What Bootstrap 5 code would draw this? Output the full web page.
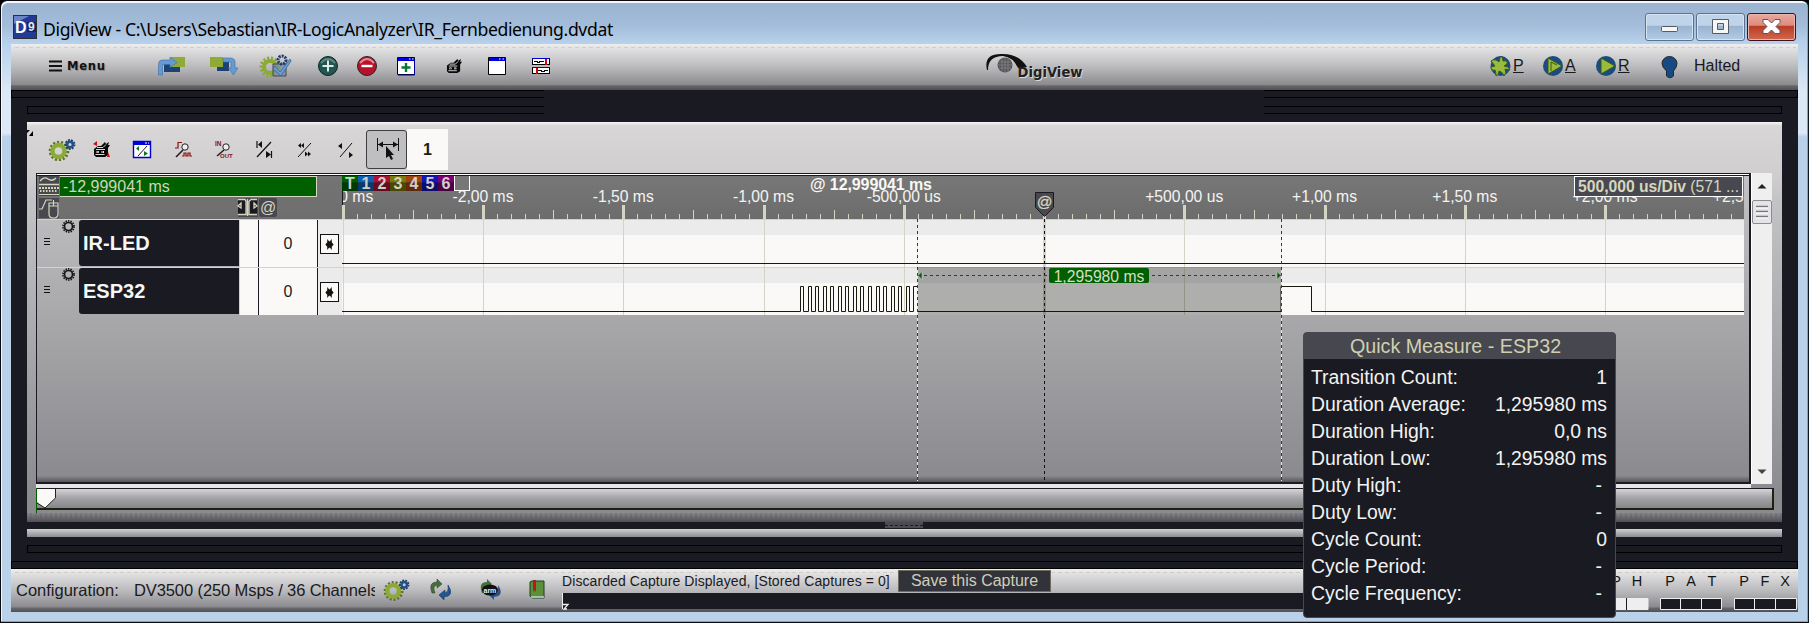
<!DOCTYPE html>
<html lang="de">
<head>
<meta charset="utf-8">
<title>DigiView</title>
<link href="https://cdn.jsdelivr.net/npm/bootstrap@5.3.0/dist/css/bootstrap.min.css" rel="stylesheet">
<style>
body{margin:0;background:#000;font-family:"Liberation Sans",sans-serif;font-size:16px;line-height:1;color:#1a1a1c;overflow:hidden}
svg{display:block;overflow:visible}
.win{width:1809px;height:623px;border:1px solid #0a0a10;border-right-color:#08181c;border-radius:7px 7px 0 0;padding:0 10px 9px 10px;box-shadow:inset -1px -1px 0 #33c6e2,inset 1px 2px 0 #f4f8fc;background:linear-gradient(#9ab4d2 3px,#a3bcd9 24px,#b8d1ec 43px,#dbe8f5 90px,#dbe8f5 132px,#bad1ea 136px)}
.titlebar{height:43px;padding:14px 0 0 2px}
.title-text{font:17.6px/28px "Noto Sans",sans-serif;color:#000;white-space:nowrap;margin-left:6px;letter-spacing:-.37px;height:26px}
.wbtn{width:49px;height:28px;border:1px solid #5c7290;border-radius:3px;box-shadow:inset 0 0 0 1px #d6e5f4;background:linear-gradient(#c0d4e9 0 44%,#98b3d0 45%,#b3cce6);margin-top:-2px;margin-left:2px}
.wbtn.shut{background:linear-gradient(#e9a99d,#dc8b7d 44%,#b83a22 45%,#cf6a50);border-color:#42121a;box-shadow:inset 0 0 0 1px #eab6ab}
.chrome{background:#191a22;height:568px}
.metal{background:linear-gradient(#efeeee,#e2e1e2 10%,#b5b4b7 55%,#8b8a8e 88%,#68676b 91%,#505054)}
.mainbar{height:46px;display:grid;align-items:center;padding:0 0 2px 38px;grid-template-columns:109px 52px 49px 59px 39px 40px 49px 42px 44px 453px 505px 53px 53px 64px 34px auto;position:relative}
.dash:before{content:"";position:absolute;left:4px;right:2px;top:3px;height:1px;background:repeating-linear-gradient(90deg,#cfcdce 0 4px,transparent 4px 7px)}
.menu-label{font:bold 11.5px/14px "DejaVu Sans",sans-serif;letter-spacing:.75px;color:#111;text-shadow:1px 1px 1px #888}
.run-key{gap:2px}
.slots{height:32px}
.slot{border:1px solid #000;height:8px;background:#191a22}
.slot.openr{border-right:0}.slot.openl{border-left:0}
.panel{margin:0 16px;height:399px;position:relative;background:linear-gradient(#fbf4f4 0,#d8d6d7 4px,#cfcdce 54px,#c3c2c5 80px,#8b8a8f 376px)}
.ptools{height:51px;display:grid;align-items:center;padding:4px 0 0 21px;grid-template-columns:45px 40px 42px 40px 41px 41px 41px 28px 41px 41px}
.pressed{height:39px;width:41px;border:1px solid #3d3d44;border-radius:3px;background:#bfbec1}
.onebox{background:#faf9f8;height:41px;width:41px;font-weight:bold;font-size:16px;color:#1e1a10}
.viewer{margin-left:9px;width:1715px;height:311px;border:2px solid #191a22;border-top:1px solid #191a22;border-left-width:1px;background:linear-gradient(#c3c2c5,#a9a9ab 45%,#8b8a8f 98%,#55545a);padding-top:2px;position:relative;box-shadow:0 4px 0 #e9e5e6}
.viewer:before{content:"";position:absolute;left:0;right:0;top:0;height:2px;background:linear-gradient(#fff 1px,#191a22 1px)}
.left{width:305px}
.lhead{height:43px;background:linear-gradient(#747474,#6e6e6e);color:#f0efe8}
.gbox{background:#006000;border:1px solid #d5d8c0;border-width:1px 1px 1px 0;width:257px;height:21px;line-height:20px;padding-left:3px;color:#cfd4bd;font-size:16px}
.chan{height:48px;border-top:1px solid #d3d4c3}
.cname{width:160px;height:46px;background:#191a22;border-radius:3px 0 0 3px;color:#f6f6f4;font-weight:bold;font-size:20px;line-height:47px;padding-left:4px;margin-left:4px}
.vcol{width:20px;background:#faf9f8;border-right:1px solid #191a22;border-left:1px solid #d3d4c3}
.val{width:59px;background:#faf9f8;border-right:1px solid #191a22;color:#222}
.xcol{width:24px;background:#ebebeb;padding-left:2px}
.xbox{width:19px;height:20px;border:1px solid #111;background:#faf9f8}
.vscroll{width:21px;height:311px;background:#f0efef;border-left:1px solid #fff}
.thumb{height:24px;border:1px solid #8c8c90;border-radius:2px;background:#e4e4e8}
.hbar{margin:4px 8px 0 9px;height:22px;border:1px solid #191a22;border-bottom:2px solid #1c2112;border-right:2px solid #1c2112;background:linear-gradient(#d8d3d9,#a6a5a8 45%,#83868a)}
.pfoot{height:9px;background:repeating-linear-gradient(90deg,#0000 0 3px,#55555c40 3px 5px),linear-gradient(#858489,#504f54);margin-top:3px}
.split{margin:8px 16px;height:8px;background:linear-gradient(#cfd0d2,#8b8c90);position:relative}
.grip{position:absolute;left:858px;top:-7px;width:38px;height:6px;background:#4c4b53}
.grip:after{content:"";display:block;margin-top:3px;border-top:1px dashed #191a22}
.status{height:43px;position:relative;padding-left:5px}
.cfg{font-size:16.5px;line-height:20px;padding-top:11px;white-space:nowrap}
.cfg-val{letter-spacing:-.1px}
.savebtn{font-size:16px;width:153px;height:22px;border:1px solid #6e6d5c;background:#32323a;color:#cfcfb8;position:relative;margin-top:1px}
.capture-note{font-size:14px;line-height:16px;padding-top:4px;width:336px;white-space:nowrap;letter-spacing:.09px}
.prog{height:16px;width:745px;background:#191a22;border-left:1px solid #eee}
.qm{position:absolute;left:1303px;top:332px;width:313px;height:286px;border:1px solid #47474f;border-radius:4px;background:#191a22;color:#f2f2f0;font-size:19.4px;line-height:26px}
.qm-head{background:#47474f;color:#cfcfb0;text-align:center;height:26px;line-height:26px;font-size:19.7px;padding-right:8px;margin-bottom:5px}
.qm-row{padding:0 8px 0 7px;height:27px}
.dashv{padding-right:5px}
</style>
</head>
<body>
<svg width="0" height="0" class="position-absolute"><defs>
<symbol id="gears" viewBox="0 0 28 22"><circle cx="11" cy="12" r="8.3" fill="none" stroke="#5c7428" stroke-width="4" stroke-dasharray="2 1.7"/><circle cx="10.5" cy="12" r="6" fill="none" stroke="#8caa38" stroke-width="4.4"/><circle cx="22" cy="5.5" r="4.2" fill="none" stroke="#173a66" stroke-width="2.4" stroke-dasharray="1.7 1.2"/><circle cx="22" cy="5.5" r="2.8" fill="none" stroke="#21508a" stroke-width="2.4"/></symbol>
<symbol id="robot" viewBox="0 0 18 17"><path d="M1 8 5 5h3l4-4 1 2 3-2-1 3h2l-2 3v7l-3 2H3l-2-2z" fill="#080808"/><path d="M4 6.500h6l3-3M3 8.500h9M2.500 13.500h9" fill="none" stroke="#eee" stroke-width=".9"/><path d="M3.500 10h2.500v2H3.500zM8.500 10h2.500v2H8.500z" fill="#eee"/><path d="M4.500 10.500h1v1h-1zM9 10.500h1v1H9z" fill="#080808"/></symbol>
<symbol id="ring" viewBox="0 0 14 14"><circle cx="7" cy="7" r="4.300" fill="none" stroke="#15151a" stroke-width="1.800"/><circle cx="7" cy="7" r="6" fill="none" stroke="#15151a" stroke-width="1.800" stroke-dasharray="1.500 1.200"/></symbol>
<symbol id="star" viewBox="0 0 9 12"><path d="M2 0v3.500L0 6l2 2.500V12l2-2.500h1L7 12V8.500L9 6 7 3.500V0L5 2.500H4z" fill="#15150c"/></symbol>
</defs></svg>
<div class="win">
  <header class="titlebar d-flex">
    <svg width="24" height="24"><rect x=".5" y=".5" width="23" height="23" fill="#223a96" stroke="#2b3038"/><path d="M1 23V9L16 1H1z" fill="#6d84ca"/><rect x="14" y="7" width="9" height="10" fill="#192356"/><text x="2" y="18" font-size="16" font-weight="bold" fill="#fff">D</text><text x="15" y="16" font-size="12" font-weight="bold" fill="#dfe4ff">9</text></svg>
    <div class="title-text">DigiView - C:\Users\Sebastian\IR-LogicAnalyzer\IR_Fernbedienung.dvdat</div>
    <div class="d-flex ms-auto" style="margin-right:2px">
      <div class="wbtn"><svg width="47" height="26"><rect x="15.500" y="12.500" width="16" height="5" rx="1" fill="#f8f6f2" stroke="#555a6a"/></svg></div>
      <div class="wbtn"><svg width="47" height="26"><path d="M15.500 5.500h16v14h-16zM20.500 9.500v6h6v-6z" fill="#f8f6f2" fill-rule="evenodd" stroke="#555a6a"/></svg></div>
      <div class="wbtn shut"><svg width="47" height="26"><path d="M15 5.500h5l3.500 3.500L27 5.500h5v3L28 12.500l4 4v3h-5L23.500 16 20 19.500h-5v-3l4-4-4-4z" fill="#fff" stroke="#5e5560"/></svg></div>
    </div>
  </header>
  <div class="chrome">
    <nav class="mainbar metal dash">
      <div class="d-flex align-items-center gap-1"><svg width="14" height="12"><path d="M0 1.500h13M0 6h13M0 10.500h13" stroke="#111" stroke-width="2"/></svg><span class="menu-label">Menu</span></div>
      <svg width="28" height="18"><path d="M6 7h16v8H6z" fill="#1d4375"/><path d="M13 0h14v10H13z" fill="#8fab35"/><path d="M.5 18V7q0-4 4-4H12V0l7 5.500-7 5V7.500H4.500V18z" fill="#649bd3" stroke="#3f6ea2" stroke-width=".6"/></svg>
      <svg width="28" height="18"><path d="M7 5h12v9H7z" fill="#1d4375"/><path d="M0 0h13v10H0z" fill="#8fab35"/><path d="M13 1h7q5 0 5 4v6h3l-4.500 7-5-7H21V5h-8z" fill="#649bd3" stroke="#3f6ea2" stroke-width=".6"/></svg>
      <svg width="33" height="22"><circle cx="11" cy="12" r="8.500" fill="none" stroke="#8caa38" stroke-width="4" stroke-dasharray="2 1.700"/><circle cx="11" cy="12" r="6" fill="none" stroke="#8caa38" stroke-width="4"/><path d="M14 9h13v12H14z" fill="#7a8ba0aa" stroke="#445" /><circle cx="23" cy="5" r="4" fill="none" stroke="#1d3e6c" stroke-width="3" stroke-dasharray="2 1"/><path d="m16 11 5 6L31 4l1 2-10 15-8-7z" fill="#669dd6" stroke="#315d90" stroke-width=".7"/></svg>
      <svg width="20" height="20"><circle cx="10" cy="10" r="9.500" fill="#24544f" stroke="#0b2625"/><path d="M3 7q7-8 14 0" fill="none" stroke="#5b8782" stroke-width="2"/><path d="M10 4.500v11M4.500 10h11" stroke="#dceee8" stroke-width="2"/></svg>
      <svg width="20" height="20"><circle cx="10" cy="10" r="9.500" fill="#b61329" stroke="#242428"/><path d="M3 7q7-8 14 0" fill="none" stroke="#e98590" stroke-width="2"/><path d="M4.500 10h11" stroke="#fff" stroke-width="2.400"/></svg>
      <svg width="18" height="18"><path d="M.5.5h17v17H.5z" fill="#fff" stroke="#001"/><path d="M1 1h16v3H1z" fill="#00d"/><path d="M17.500 3v15H1" fill="none" stroke="#009"/><path d="M9 6v9M4.500 10.500h9" stroke="#067a35" stroke-width="2.400"/><path d="M12 2h1.500M15 2h1.500" stroke="#fff"/></svg>
      <svg width="17" height="16"><use href="#robot"/></svg>
      <svg width="18" height="18"><path d="M.5.5h17v17H.5z" fill="#fff" stroke="#000"/><path d="M1 1h16v3H1z" fill="#00d"/><path d="M11 2h1.500M14.500 2H16" stroke="#fff"/></svg>
      <svg width="18" height="16" shape-rendering="crispEdges"><path d="M.5.500h17v6H.5zM.5 9.500h17v6H.5z" fill="#fff" stroke="#000"/><path d="M0 .5h18M0 9.500h18" stroke="#00c"/><path d="M2 3.500h3v1h2v-1h5M6 12.500h3v1h3v-1h4" stroke="#000" fill="none"/><path d="M14 1v6M5 10v6" stroke="#d00" stroke-width="2"/></svg>
      <svg width="98" height="26"><path d="M2 17Q-2 0 18 1q16 0 24 13l-9 1Q28 4 18 3 3 3 3 17z" fill="#111"/><circle cx="20" cy="12" r="7.500" fill="#55555a"/><path d="M14 9h12M13 12h14M14 15h12M17 5v14M20 5v15M23 5v14" stroke="#8a8a8e" stroke-width=".7"/><text x="32.500" y="23.500" font-size="13.500" font-family="DejaVu Sans" font-weight="bold" fill="#222" textLength="65" lengthAdjust="spacingAndGlyphs" style="text-shadow:1px 1px 0 #d8d8d8">DigiView</text></svg>
      <div class="run-key d-flex align-items-center"><svg width="21" height="22"><circle cx="10.500" cy="11" r="10" fill="#1c4c7e"/><path d="M1 6q4-3 8 1 0-4 3-6l1 5q5-1 4 3l-3 2q5 0 6 4l-5-1q2 4-1 7-1-4-5-5 0 4-3 5 0-4-1-6-4 1-4-3l4-1z" fill="#9bbb3c" stroke="#39591c"/></svg><u>P</u></div>
      <div class="run-key d-flex align-items-center"><svg width="20" height="22"><circle cx="10" cy="11" r="10" fill="#1c4c7e"/><path d="M5 3v16l14-8z" fill="#9bbb3c" stroke="#39591c"/><path d="M8 16V7l6 3" fill="none" stroke="#39591c"/></svg><u>A</u></div>
      <div class="run-key d-flex align-items-center"><svg width="20" height="22"><circle cx="10" cy="11" r="10" fill="#1c4c7e"/><path d="M5 3v16l14-8z" fill="#9bbb3c" stroke="#39591c"/></svg><u>R</u></div>
      <svg width="18" height="23"><path d="M5.500 20v-5Q1 11 1 7.500a7.500 7 0 0 1 15 0Q16 11 12.500 15v5q-3.500 3.500-7 0z" fill="#174a80" stroke="#222a30" transform="translate(1 1)"/></svg>
      <div>Halted</div>
    </nav>
    <div class="slots d-flex justify-content-between"><div>
      <div class="slot openr" style="width:533px"></div><div class="slot openr" style="width:517px;margin:8px 0 0 16px"></div></div>
      <div><div class="slot openl" style="width:534px"></div><div class="slot openl" style="width:518px;margin-top:8px"></div></div></div>
    <main class="panel">
      <svg class="position-absolute" style="left:0;top:8px" width="6" height="6"><path d="M0 0h3L0 3zM6 1v5H2z" fill="#000"/></svg>
      <div class="ptools">
        <svg width="28" height="22"><use href="#gears"/></svg>
        <svg width="18" height="17"><use href="#robot"/><path d="m0 3 4-3v5zM15 11l-1 5h3z" fill="#d01010"/></svg>
        <svg width="18" height="17"><path d="M.5.500h17v16H.5z" fill="#fff" stroke="#00c" stroke-width="1.400"/><path d="M1 1h16v3H1z" fill="#00d"/><path d="M12 2h2M15 2h1" stroke="#fff"/><path d="M14 5 5 15" stroke="#222"/><path d="M6 5v5L3 7.500zM11 10v5l4-2.500z" fill="#087a18"/></svg>
        <svg width="17" height="15"><path d="M0 6h3V.5h4M7 14h2v-3h2v3h2v-3h2v3h2" fill="none" stroke="#8b1010" stroke-width="1.200"/><circle cx="10" cy="5" r="3.200" fill="#eee" stroke="#222"/><path d="m8 8-7 7" stroke="#222" stroke-width="1.600"/></svg>
        <svg width="18" height="17"><text x="0" y="5" font-size="6.500" font-weight="bold" fill="#8b1010">IN</text><text x="5" y="17" font-size="6" font-weight="bold" fill="#8b1010">OUT</text><circle cx="11" cy="6" r="3.200" fill="#eee" stroke="#222"/><path d="m9 9-7 6" stroke="#222" stroke-width="1.600"/></svg>
        <svg width="17" height="17"><path d="M1 0v7M15.500 10v7M15 1 1 16" stroke="#111" stroke-width="1.200"/><path d="M6 0v7L2 3.500zM10 10v7l5-3.500z" fill="#111"/></svg>
        <svg width="15" height="15"><path d="M14 1 1 15" stroke="#111"/><path d="M4 1v5L1 3.500zM7 1v5L4 3.500zM8 9.500v5l3-2.500zM11 9.500v5l3-2.500z" fill="#111"/></svg>
        <svg width="15" height="16"><path d="M14 1 2 15" stroke="#111"/><path d="M4 1v6L0 4zM11 10v6l4-3z" fill="#111"/></svg>
        <div class="pressed"><svg width="39" height="37"><path d="M10.500 7v13M31.500 7v13M11 13.500h20" stroke="#111"/><path d="m11 13.500 5-3v6zM31 13.500l-5-3v6z" fill="#111"/><path d="m19 15v12l3-2 2 4 2-1-2-4h3z" fill="#111"/></svg></div>
        <div class="onebox d-flex align-items-center justify-content-center">1</div>
      </div>
      <div class="d-flex">
        <div class="viewer d-flex">
          <div class="left">
            <div class="lhead">
              <div class="d-flex"><svg width="23" height="21"><rect x="2" y="0" width="20" height="20" fill="#484850"/><path d="M3 5q4-5 8-2t8-1M2 8.500h20" fill="none" stroke="#d5d6bd" stroke-width="1.400"/><path d="M2 12h20" stroke="#d5d6bd" stroke-width="2" stroke-dasharray="2 1"/><path d="M3 15h18" stroke="#d5d6bd" stroke-width="2" stroke-dasharray="1.500 1.500"/><path d="M2 18.500h20" stroke="#d5d6bd"/></svg><div class="gbox">-12,999041 ms</div></div>
              <div class="d-flex"><svg width="23" height="21"><rect x="2" y="1" width="20" height="20" fill="#484850"/><path d="M2 12h3l4-9h6M12 6h9v11q0 4-4.500 4T12 17zM12 9h9M16.500 3v6" fill="none" stroke="#d5d6bd" stroke-width="1.200"/></svg>
              <svg width="42" height="21" style="margin-left:178px"><rect y="1" width="20" height="19" fill="#484850"/><path d="M0 2.500h7l1 2v13h-8M19 2.500h-6l-2 2v13h8M9.500 2v17M0 9l3-3v5zM19 9l-3-3v5z" fill="#191a22" stroke="#d5d6bd" stroke-width="1.300"/><rect x="21" y="1" width="18" height="19" rx="2" fill="#484850"/><text x="22" y="16" font-size="16" fill="#d5d6bd">@</text></svg></div>
            </div>
            <div class="chan d-flex"><svg width="38" height="46"><path d="M7 18.500h6M7 21.500h6M7 24.500h6" stroke="#111" stroke-width="1.200"/><use href="#ring" x="25" y="0" width="13" height="13"/></svg><div class="cname">IR-LED</div><div class="vcol"></div><div class="val d-flex align-items-center justify-content-center">0</div><div class="xcol d-flex align-items-center"><div class="xbox"><svg width="17" height="18"><use href="#star" x="4" y="4" width="9" height="11"/></svg></div></div></div>
            <div class="chan d-flex"><svg width="38" height="46"><path d="M7 18.500h6M7 21.500h6M7 24.500h6" stroke="#111" stroke-width="1.200"/><use href="#ring" x="25" y="0" width="13" height="13"/></svg><div class="cname">ESP32</div><div class="vcol"></div><div class="val d-flex align-items-center justify-content-center">0</div><div class="xcol d-flex align-items-center"><div class="xbox"><svg width="17" height="18"><use href="#star" x="4" y="4" width="9" height="11"/></svg></div></div></div>
          </div>
          <svg id="wave" width="1402" height="306" viewBox="342 176 1402 306" style="overflow:hidden" font-size="15.700"></svg>
        </div>
        <div class="vscroll"><svg width="20" height="27"><path d="m5.500 15.500 4.500-4.500 4.500 4.500z" fill="#222"/></svg><div class="thumb"><svg width="18" height="22"><path d="M3 5.500h12M3 10.500h12M3 15.500h12" stroke="#777" stroke-width="1.500"/><path d="M3 7h12M3 12h12M3 17h12" stroke="#fff"/></svg></div><svg width="20" height="255"><path d="m5.500 245.500 4.500 4.500 4.500-4.500z" fill="#444"/></svg></div>
      </div>
      <div class="hbar"><svg width="20" height="20"><path d="M0 0h18.500v9L8 19 0 13z" fill="#faf9f8"/><path d="M18.500 0v9L8 19 0 14" fill="none" stroke="#222"/><path d="M-.5-4v28" stroke="#006000"/></svg></div>
      <div class="pfoot"></div>
    </main>
    <div class="split"><div class="grip"></div></div>
    <div class="slot" style="margin:0 16px"></div>
    <div class="slot" style="margin-top:8px"></div>
    <footer class="status metal dash d-flex">
      <div class="cfg" style="width:118px">Configuration:</div>
      <div class="cfg cfg-val overflow-hidden" style="width:241px">DV3500 (250 Msps / 36 Channels)</div>
      <div class="d-flex align-items-center" style="width:187px;padding-left:8px;height:41px">
        <svg width="27" height="22"><use href="#gears"/></svg>
        <svg width="24" height="21" style="margin-left:19px"><path d="M3 14Q-1 3 8 3V0l5 5-5 4V6Q3 7 6 14z" fill="#456d3d" stroke="#2f4c2e" stroke-width=".6"/><path d="M19 6q7 11-4 12v3l-5-5 6-5v3q4-1 3-8z" fill="#235591" stroke="#173a66" stroke-width=".6"/></svg>
        <svg width="24" height="21" style="margin-left:26px"><path d="M3 14Q-1 3 8 3V0l5 5-5 4V6Q3 7 6 14z" fill="#456d3d"/><path d="M19 6q7 11-4 12v3l-5-5 6-5v3q4-1 3-8z" fill="#235591"/><ellipse cx="11" cy="11" rx="8" ry="5.500" fill="#111"/><text x="4.500" y="13.500" font-size="7" font-weight="bold" fill="#eee">arm</text></svg>
        <svg width="15" height="19" style="margin-left:27px"><path d="M2 1h12v17H2l-2-2V2z" fill="#5d8f3b" stroke="#1d3f22"/><path d="M1 17h13" stroke="#bfd8cf" stroke-width="1.500"/><path d="M3 0h3v12l-1.500-2L3 12z" fill="#bb1624"/></svg>
      </div>
      <div>
        <div class="d-flex align-items-start" style="height:24px"><div class="capture-note">Discarded Capture Displayed, [Stored Captures = 0]</div><div class="savebtn d-flex align-items-center justify-content-center">Save this Capture</div></div>
        <div class="prog"><svg width="6" height="16"><path d="M0 11.500h5L1 16h3" fill="none" stroke="#eee" stroke-width="1.300"/></svg></div>
      </div>
      <svg width="180" height="43" style="margin-left:289px;flex:none" font-size="14.500" text-anchor="middle" fill="#15150f"><text x="20" y="17">P</text><text x="41" y="17">H</text><text x="74" y="17">P</text><text x="95" y="17">A</text><text x="116" y="17">T</text><text x="148" y="17">P</text><text x="169" y="17">F</text><text x="189" y="17">X</text>
      <g stroke="#eee"><path d="M11 29.500h41v11h-41z" fill="#eee"/><path d="M30.500 29v12" stroke="#191a22"/><path d="M64.500 29.500h20v11h-20zM84.500 29.500h21v11h-21zM105.500 29.500h20v11h-20zM138.500 29.500h20v11h-20zM158.500 29.500h21v11h-21zM179.500 29.500h21v11h-21z" fill="#191a22"/></g></svg>
    </footer>
  </div>
</div>
<aside class="qm">
  <div class="qm-head">Quick Measure - ESP32</div>
  <div class="qm-row d-flex justify-content-between"><span>Transition Count:</span><span>1</span></div>
  <div class="qm-row d-flex justify-content-between"><span>Duration Average:</span><span>1,295980 ms</span></div>
  <div class="qm-row d-flex justify-content-between"><span>Duration High:</span><span>0,0 ns</span></div>
  <div class="qm-row d-flex justify-content-between"><span>Duration Low:</span><span>1,295980 ms</span></div>
  <div class="qm-row d-flex justify-content-between"><span>Duty High:</span><span class="dashv">-</span></div>
  <div class="qm-row d-flex justify-content-between"><span>Duty Low:</span><span class="dashv">-</span></div>
  <div class="qm-row d-flex justify-content-between"><span>Cycle Count:</span><span>0</span></div>
  <div class="qm-row d-flex justify-content-between"><span>Cycle Period:</span><span class="dashv">-</span></div>
  <div class="qm-row d-flex justify-content-between"><span>Cycle Frequency:</span><span class="dashv">-</span></div>
</aside>
<script>
// Timeline: ruler, two channel traces and the measured span
const div = 140.25, mid = 1044.5;
let s = '<defs><linearGradient id="hd" x2="0" y2="1"><stop stop-color="#777"/><stop offset="1" stop-color="#6c6c6c"/></linearGradient><linearGradient id="sh" x2="0" y2="1"><stop offset=".4" stop-color="#000" stop-opacity="0"/><stop offset=".5" stop-color="#000" stop-opacity=".4"/></linearGradient></defs>';
const rect = (x, y, w, h, f, o = '') => `<rect x="${x}" y="${y}" width="${w}" height="${h}" fill="${f}" ${o}/>`;
s += rect(342, 176, 1402, 43, 'url(#hd)') + rect(342, 219, 1402, 96, '#faf9f8');
for (const y of [219, 267]) s += rect(342, y + 1, 1402, 15, '#ebebeb') + rect(342, y, 1402, 1, '#d3d4c3');
for (let i = -50; i < 50; i++) {
  const x = Math.round(mid + i * div / 10 - .5);
  if (i % 10 === 0) s += rect(x - 1, 205, 3, 14, '#d3d4c3') + rect(x, 219, 1, 96, '#d3d4c3');
  else { const h = i % 5 === 0 ? 9 : 5; s += rect(x, 219 - h, 1, h, '#d3d4c3'); }
}
s += rect(1043, 219, 3, 96, '#d3d4c3') + rect(918, 267, 363, 48, '#000', 'opacity=".3"');
const labels = ['-2,50 ms', '-2,00 ms', '-1,50 ms', '-1,00 ms', '-500,00 us', '', '+500,00 us', '+1,00 ms', '+1,50 ms', '+2,00 ms', '+2,50 ms'];
labels.forEach((t, i) => { if (t) s += `<text x="${mid + (i - 5) * div - .5}" y="202" text-anchor="middle" fill="#f4f4f2">${t}</text>`; });
s += rect(342, 191, 1, 14, '#191a22');
['#006000', '#125fae', '#a81436', '#7a7a08', '#a04412', '#1414b8', '#7c0070'].forEach((c, i) => {
  const x = 342 + i * 16;
  s += rect(x, 175, 16, 16, c) + rect(x, 175, 16, 16, 'url(#sh)') + `<text x="${x + 8}" y="189" text-anchor="middle" font-weight="bold" fill="#d0d0c8" font-size="16">${'T123456'[i]}</text>`;
});
s += rect(454.5, 175.500, 15, 15, '#777', 'stroke="#fff"');
s += '<text x="810" y="190" font-weight="bold" font-size="16" fill="#f8f8f4" textLength="122">@ 12,999041 ms</text>';
s += rect(1574.5, 176.500, 168, 20, '#484850', 'stroke="#fff"') + '<text x="1578" y="192" fill="#d5d6bd" textLength="161"><tspan font-weight="bold">500,000 us/Div</tspan> (571 ...</text>';
// channel traces
s += rect(342, 263, 1402, 1, '#18180c');
let p = 'M342 311.500';
for (let i = 0; i < 16; i++) {
  const x = Math.round(800 + i * 7.56) + .5;
  p += `H${x}V286.500H${i < 15 ? x + 3 : 917.5}V311.500`;
}
p += 'H1281V286.500H1311.500V311.500H1744';
s += `<path d="${p}" fill="none" stroke="#18180c"/>`;
for (const x of [917.5, 1281.5]) s += `<path d="M${x} 219V481" stroke="#e6ece2"/><path d="M${x} 219V481" stroke="#006000" stroke-dasharray="3"/>`;
s += '<path d="M1044.500 219V481" stroke="#111" stroke-dasharray="3"/>';
s += '<path d="M918 275.500H1281" stroke="#006000" stroke-dasharray="3"/><path d="m918 275.500 4-4v8zM1281 275.500l-4-4v8z" fill="#006000" stroke="#d8e0d4" stroke-width=".5"/>';
s += rect(1049, 268, 100, 15, '#006000', 'rx="2"') + '<text x="1099" y="282" text-anchor="middle" font-size="15.700" fill="#d8dcc4">1,295980 ms</text>';
s += '<path d="M1035.500 192.500h18v15l-9 9-9-9z" fill="#484850" stroke="#191a22"/><text x="1044.500" y="207" text-anchor="middle" font-size="15.500" fill="#d5d6bd" stroke="#d5d6bd" stroke-width=".3">@</text>';
document.getElementById('wave').innerHTML = s;
</script>
<script src="https://cdn.jsdelivr.net/npm/bootstrap@5.3.0/dist/js/bootstrap.bundle.min.js"></script>
</body>
</html>
